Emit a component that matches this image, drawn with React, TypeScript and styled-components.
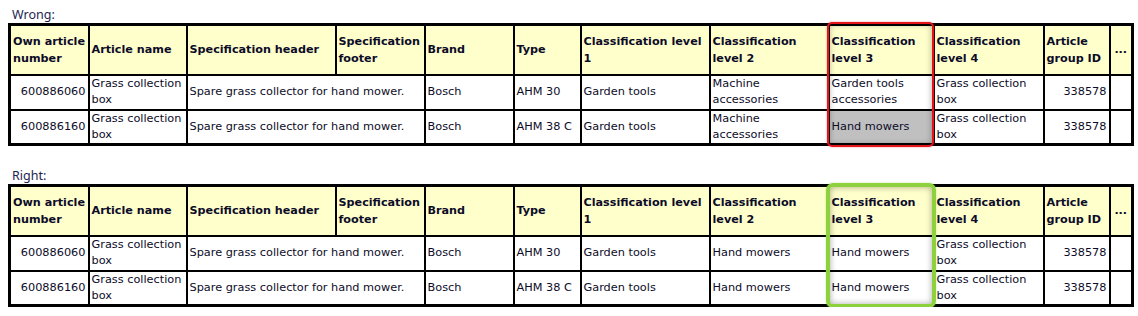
import React from 'react'
import styled, { createGlobalStyle } from 'styled-components'

const GlobalStyle = createGlobalStyle`
  html, body {
    margin: 0;
    padding: 0;
    background: #ffffff;
  }
`

const Page = styled.div`
  padding: 6px 0 0 8px;
  display: flex;
  flex-direction: column;
  gap: 21px;
  font-family: "DejaVu Sans", Verdana, sans-serif;
  color: #0c0c28;
`

const Section = styled.section`
  display: flex;
  flex-direction: column;
`

const Label = styled.div`
  font-family: "Noto Sans", "DejaVu Sans", sans-serif;
  font-size: 12.5px;
  line-height: 18px;
  height: 17px;
  padding-left: 4px;
  color: #1e1e50;
`

const TableWrap = styled.div`
  position: relative;
  width: 1123px;
`

const Table = styled.table`
  border-collapse: collapse;
  table-layout: fixed;
  width: 1123px;
  border: 3px solid #000;
`

const HeadCell = styled.th<{ $center?: boolean }>`
  background: #ffffcc;
  border: 2px solid #000;
  font-weight: bold;
  font-size: 11.2px;
  line-height: 17px;
  height: 50px;
  padding: 0 2px;
  text-align: ${p => (p.$center ? 'center' : 'left')};
  vertical-align: middle;
  box-sizing: border-box;
`

const Cell = styled.td<{ $num?: boolean; $shade?: boolean }>`
  background: ${p => (p.$shade ? '#c0c0c0' : '#ffffff')};
  border: 2px solid #000;
  font-size: 11.3px;
  line-height: 16px;
  height: 35px;
  padding: 0 2px;
  text-align: ${p => (p.$num ? 'right' : 'left')};
  vertical-align: middle;
  box-sizing: border-box;
`

// outline drawn over the "Classification level 3" column
const Highlight = styled.div<{ $tone: 'red' | 'green' }>`
  position: absolute;
  pointer-events: none;
  top: -1px;
  bottom: -1px;
  left: ${p => (p.$tone === 'red' ? 819 : 818)}px;
  width: ${p => (p.$tone === 'red' ? 107 : 110)}px;
  box-sizing: border-box;
  border: ${p => (p.$tone === 'red' ? '2px solid #e5131a' : '4px solid #8dd13f')};
  border-radius: ${p => (p.$tone === 'red' ? 5 : 7)}px;
  box-shadow: inset 0 0 6px rgba(0, 0, 0, 0.35),
    0 0 2px ${p => (p.$tone === 'red' ? 'rgba(229, 19, 26, 0.5)' : 'rgba(141, 209, 63, 0.6)')};
`

const cols = [79, 98, 149, 89, 89, 67, 129, 119, 105, 110, 66, 23]

const headers = [
  'Own article number',
  'Article name',
  'Specification header',
  'Specification footer',
  'Brand',
  'Type',
  'Classification level 1',
  'Classification level 2',
  'Classification level 3',
  'Classification level 4',
  'Article group ID',
  '...'
]

type Row = {
  number: string
  type: string
  level2: string
  level3: string
  shadeLevel3?: boolean
}

const wrongRows: Row[] = [
  { number: '600886060', type: 'AHM 30', level2: 'Machine accessories', level3: 'Garden tools accessories' },
  { number: '600886160', type: 'AHM 38 C', level2: 'Machine accessories', level3: 'Hand mowers', shadeLevel3: true }
]

const rightRows: Row[] = [
  { number: '600886060', type: 'AHM 30', level2: 'Hand mowers', level3: 'Hand mowers' },
  { number: '600886160', type: 'AHM 38 C', level2: 'Hand mowers', level3: 'Hand mowers' }
]

function ArticleTable({ title, rows, tone }: { title: string; rows: Row[]; tone: 'red' | 'green' }) {
  return (
    <Section>
      <Label>{title}</Label>
      <TableWrap>
        <Table>
          <colgroup>
            {cols.map((w, i) => (
              <col key={i} style={{ width: w }} />
            ))}
          </colgroup>
          <thead>
            <tr>
              {headers.map(h => (
                <HeadCell key={h} $center={h === '...'}>
                  {h}
                </HeadCell>
              ))}
            </tr>
          </thead>
          <tbody>
            {rows.map(r => (
              <tr key={r.number}>
                <Cell $num>{r.number}</Cell>
                <Cell>Grass collection box</Cell>
                <Cell colSpan={2}>Spare grass collector for hand mower.</Cell>
                <Cell>Bosch</Cell>
                <Cell>{r.type}</Cell>
                <Cell>Garden tools</Cell>
                <Cell>{r.level2}</Cell>
                <Cell $shade={r.shadeLevel3}>{r.level3}</Cell>
                <Cell>Grass collection box</Cell>
                <Cell $num>338578</Cell>
                <Cell />
              </tr>
            ))}
          </tbody>
        </Table>
        <Highlight $tone={tone} />
      </TableWrap>
    </Section>
  )
}

export default function App() {
  return (
    <>
      <GlobalStyle />
      <Page>
        <ArticleTable title="Wrong:" rows={wrongRows} tone="red" />
        <ArticleTable title="Right:" rows={rightRows} tone="green" />
      </Page>
    </>
  )
}
